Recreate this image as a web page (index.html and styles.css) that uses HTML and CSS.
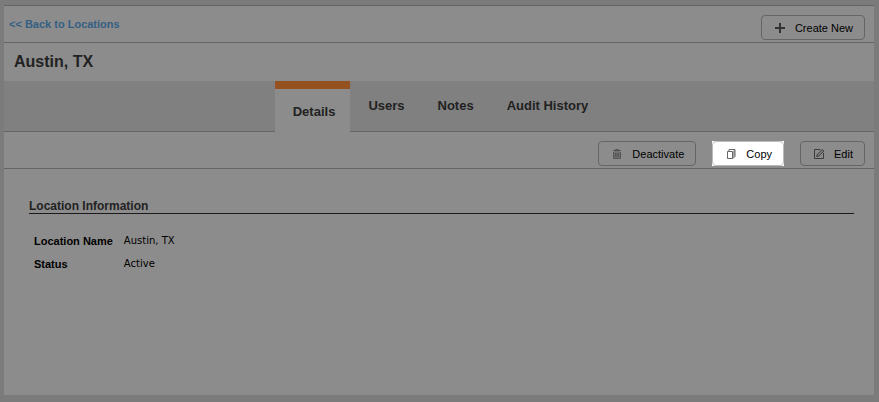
FILE: index.html
```html
<!DOCTYPE html>
<html lang="en">
<head>
    <meta charset="UTF-8">
    <meta name="viewport" content="width=device-width, initial-scale=1.0">
    <title>Austin, TX - Locations</title>
    <link rel="stylesheet" href="styles.css">
</head>
<body>
    <main class="panel">
        <div class="topbar">
            <a class="back" href="#">&lt;&lt; Back to Locations</a>
            <button type="button" class="btn">
                <svg class="icon" width="12" height="12" viewBox="0 0 12 12"><path d="M6 1v10M1 6h10" fill="none" stroke="#333" stroke-width="2"/></svg>
                Create New
            </button>
        </div>

        <h1 class="title">Austin, TX</h1>

        <nav class="tabs">
            <a class="tab active" href="#details">Details</a>
            <a class="tab" href="#users">Users</a>
            <a class="tab" href="#notes">Notes</a>
            <a class="tab" href="#audit">Audit History</a>
        </nav>

        <div class="actions">
            <button type="button" class="btn">
                <svg class="icon" width="12" height="12" viewBox="0 0 12 12">
                    <path d="M3 3h6v8H3z" fill="#707070"/>
                    <path d="M4.500 2V1.500h3V2M2 2.500h8M2.500 4v6.500h7V4M4.500 5v4M6 5v4M7.500 5v4" fill="none" stroke="#555"/>
                </svg>
                Deactivate
            </button>
            <div class="highlight">
                <button type="button" class="btn">
                    <svg class="icon" width="12" height="12" viewBox="0 0 12 12">
                        <path d="M8 3l2-2v7l-2 2z" fill="#aaa"/>
                        <path d="M2.500 3.500h5v7h-5zM4 3V1.500h6v7L8 10.500" fill="none" stroke="#666"/>
                    </svg>
                    Copy
                </button>
            </div>
            <button type="button" class="btn">
                <svg class="icon" width="12" height="12" viewBox="0 0 12 12">
                    <path d="M7.500 1.500h-6v9h9V5" fill="none" stroke="#3c3c3c"/>
                    <path d="M3.500 8.500l1-2.500 5-4.500 1.500 1.500-5 5z" fill="#777" stroke="#444"/>
                </svg>
                Edit
            </button>
        </div>

        <section class="info" id="details">
            <h2>Location Information</h2>
            <table>
                <tr>
                    <th scope="row">Location Name</th>
                    <td>Austin, TX</td>
                </tr>
                <tr>
                    <th scope="row">Status</th>
                    <td>Active</td>
                </tr>
            </table>
        </section>
    </main>
</body>
</html>
```

FILE: styles.css
```css
* { box-sizing: border-box; }

body {
    margin: 0;
    padding: 5px 5px 7px 4px;
    min-height: 100vh;
    display: flex;
    background: #7b7b7b;
    color: #000;
    font-family: Arial, "Liberation Sans", sans-serif;
    font-size: 11px;
}

.panel { flex: 1; background: #8c8c8c; border-top: 1px solid #656565; }

.topbar { display: flex; justify-content: space-between; align-items: flex-start; height: 37px; padding: 9px 9px 0 5px; border-bottom: 1px solid #656565; }
.back { color: #345f83; font-weight: bold; line-height: 18px; text-decoration: none; }

.btn {
    display: flex;
    align-items: center;
    gap: 9px;
    height: 25px;
    padding: 0 11px 0 12px;
    border: 1px solid #656565;
    border-radius: 4px;
    background: transparent;
    color: #000;
    font-family: inherit;
    font-size: 11px;
    cursor: pointer;
}
.highlight { background: #fff; }
.highlight .btn { border-color: #bbb; }

.title { margin: 0; padding: 0 10px; color: #222; font-size: 16px; line-height: 38px; }

.tabs { display: flex; justify-content: center; height: 51px; background: #808080; box-shadow: inset 0 -1px #656565; }
.tab { padding: 0 15px 0 18px; color: #222; font-size: 13px; font-weight: bold; line-height: 50px; text-decoration: none; }
.active { border-top: 8px solid #955120; background: #8c8c8c; line-height: 46px; }

.actions { display: flex; justify-content: flex-end; gap: 16px; padding: 9px 9px 2px; border-bottom: 1px solid #656565; }

.info { padding: 30px 20px 20px 25px; }
.info h2 { margin: 0 0 15px; color: #222; font-size: 12px; line-height: 14px; border-bottom: 1px solid #1c1a1c; }
.info table { margin-left: 5px; border-collapse: collapse; }
.info th, .info td { height: 23px; padding: 0; text-align: left; }
.info th { padding-right: 11px; }
.info td { font-family: Verdana, "DejaVu Sans", sans-serif; font-size: 10px; }
```
